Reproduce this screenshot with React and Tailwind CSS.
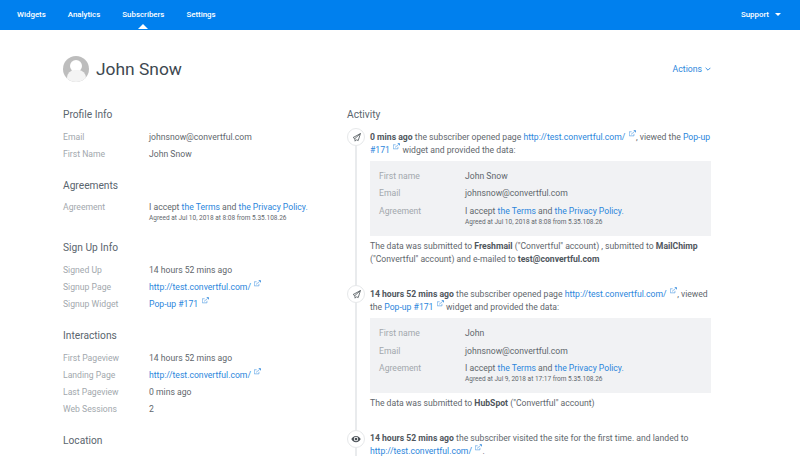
import React from "react";

function ExtIcon() {
    return (
        <svg viewBox="0 0 12 12" className="inline-block relative top-[-3px] w-[7px] h-[7px] ml-[3.5px] align-baseline text-[#2b86dc]" fill="none" stroke="currentColor">
            <path d="M8.5 6.5v3.500h-8v-7h4" strokeWidth="0.9" />
            <path d="M3.500 7.500L9 3" strokeWidth="0.9" />
            <path d="M7.500 0.300h4.200v4.200z" fill="currentColor" stroke="none" />
        </svg>
    );
}

function A({children}) {
    return <a className="text-[#2b86dc]">{children}</a>;
}

function Row({label, children}) {
    return (
        <div className="flex mb-[4.3px]">
            <div className="w-[86px] shrink-0 text-[#a2a8ad]">{label}</div>
            <div className="text-[#5f676d]">{children}</div>
        </div>
    );
}

function Section({title, children}) {
    return (
        <div className="mb-[17.9px]">
            <h3 className="text-[10.2px] leading-[14px] text-[#5a656e] mb-[8.5px]">{title}</h3>
            {children}
        </div>
    );
}

function Agreement({date}) {
    return (
        <div>
            I accept <A>the Terms</A> and <A>the Privacy Policy</A><span className="text-[#2b86dc]">.</span>
            <div className="text-[6.5px] leading-[9px]">{date}</div>
        </div>
    );
}

function Rocket() {
    return (
        <svg viewBox="0 0 16 16" className="w-[9px] h-[9px]" fill="none" stroke="#4a5157" strokeWidth="1.4" strokeLinejoin="round">
            <path d="M15 1L2 8l3 2 .5 4.500L8 12l3 1.500z" />
            <path d="M15 1L5 10" />
        </svg>
    );
}

function Eye() {
    return (
        <svg viewBox="0 0 16 12" className="w-[10px] h-[8px]" fill="#4a5157">
            <path fillRule="evenodd" d="M8 1C4.500 1 1.800 3.200 0.500 6 1.800 8.800 4.500 11 8 11s6.200-2.200 7.500-5C14.200 3.200 11.500 1 8 1zm0 8.500A3.500 3.500 0 1 1 8 2.500a3.500 3.500 0 0 1 0 7z" />
            <circle cx="8" cy="6" r="2.200" />
        </svg>
    );
}

function Item({icon, children, mb}) {
    return (
        <div className={"relative pl-[23px] " + mb}>
            <div className="absolute left-0 top-[-2.5px] w-[18px] h-[18px] rounded-full bg-white border border-[#e6e8ea] flex items-center justify-center">
                {icon}
            </div>
            {children}
        </div>
    );
}

function DataBox({children}) {
    return <div className="bg-[#f1f2f4] mt-[4.5px] mb-[4px] pt-[9px] pb-[5px] px-[9px]">{children}</div>;
}

function B({children}) {
    return <b className="font-bold text-[#4f565c]">{children}</b>;
}

export default function App() {
    return (
        <div className="h-screen overflow-hidden bg-white font-['Roboto',sans-serif] text-[8.65px] leading-[13px] text-[#5f676d]">
            <nav className="h-[30px] bg-[#0080ee] flex items-center justify-between pl-[17px] pr-[19px] pb-[2px] text-[7.9px] font-medium text-white">
                <div className="flex gap-[22px]">
                    <a>Widgets</a>
                    <a>Analytics</a>
                    <a className="relative">
                        Subscribers
                        <span className="absolute left-1/2 -translate-x-1/2 top-[16px] w-0 h-0 border-x-[5px] border-x-transparent border-b-[5px] border-b-white"></span>
                    </a>
                    <a>Settings</a>
                </div>
                <div className="flex items-center gap-[6px]">
                    <a>Support</a>
                    <span className="w-0 h-0 border-x-[3px] border-x-transparent border-t-[3px] border-t-white"></span>
                </div>
            </nav>

            <div className="pl-[63px] pr-[89px]">
                <div className="flex items-center justify-between h-[78px]">
                    <div className="flex items-center gap-[7px]">
                        <div className="w-[26px] h-[26px] rounded-full bg-[#bdbdbd] overflow-hidden flex flex-col items-center">
                            <div className="w-[12px] h-[13px] rounded-full bg-white mt-[4px]"></div>
                            <div className="w-[19px] h-[12px] rounded-t-[8px] bg-[#f4f4f4] -mt-[2px]"></div>
                        </div>
                        <h1 className="text-[17.4px] leading-[26px] text-[#3d4850]">John Snow</h1>
                    </div>
                    <a className="flex items-center gap-[3px] text-[8.7px] text-[#2b86dc]">
                        Actions
                        <svg viewBox="0 0 10 10" className="w-[6px] h-[6px]" fill="none" stroke="#2b86dc" strokeWidth="1.5"><path d="M1 3l4 4 4-4" /></svg>
                    </a>
                </div>

                <div className="flex">
                    <div className="w-[284px] shrink-0">
                        <Section title="Profile Info">
                            <Row label="Email">johnsnow@convertful.com</Row>
                            <Row label="First Name">John Snow</Row>
                        </Section>
                        <Section title="Agreements">
                            <Row label="Agreement"><Agreement date="Agreed at Jul 10, 2018 at 8:08 from 5.35.108.26" /></Row>
                        </Section>
                        <Section title="Sign Up Info">
                            <Row label="Signed Up">14 hours 52 mins ago</Row>
                            <Row label="Signup Page"><A>http://test.convertful.com/</A><ExtIcon /></Row>
                            <Row label="Signup Widget"><A>Pop-up #171</A><ExtIcon /></Row>
                        </Section>
                        <Section title="Interactions">
                            <Row label="First Pageview">14 hours 52 mins ago</Row>
                            <Row label="Landing Page"><A>http://test.convertful.com/</A><ExtIcon /></Row>
                            <Row label="Last Pageview">0 mins ago</Row>
                            <Row label="Web Sessions">2</Row>
                        </Section>
                        <Section title="Location"></Section>
                    </div>

                    <div className="flex-1 min-w-0">
                        <h3 className="text-[10.2px] leading-[14px] text-[#5a656e] mb-[8.5px]">Activity</h3>
                        <div className="relative">
                            <div className="absolute left-[8px] top-0 bottom-[-50px] w-[2px] bg-[#e9ebed]"></div>
                            <Item icon={<Rocket />} mb="mb-[22px]">
                                <B>0 mins ago</B> the subscriber opened page <A>http://test.convertful.com/</A><ExtIcon />, viewed the <A>Pop-up #171</A><ExtIcon /> widget and provided the data:
                                <DataBox>
                                    <Row label="First name">John Snow</Row>
                                    <Row label="Email">johnsnow@convertful.com</Row>
                                    <Row label="Agreement"><Agreement date="Agreed at Jul 10, 2018 at 8:08 from 5.35.108.26" /></Row>
                                </DataBox>
                                The data was submitted to <B>Freshmail</B> ("Convertful" account) , submitted to <B>MailChimp</B> ("Convertful" account) and e-mailed to <B>test@convertful.com</B>
                            </Item>
                            <Item icon={<Rocket />} mb="mb-[22px]">
                                <B>14 hours 52 mins ago</B> the subscriber opened page <A>http://test.convertful.com/</A><ExtIcon />, viewed the <A>Pop-up #171</A><ExtIcon /> widget and provided the data:
                                <DataBox>
                                    <Row label="First name">John</Row>
                                    <Row label="Email">johnsnow@convertful.com</Row>
                                    <Row label="Agreement"><Agreement date="Agreed at Jul 9, 2018 at 17:17 from 5.35.108.26" /></Row>
                                </DataBox>
                                The data was submitted to <B>HubSpot</B> ("Convertful" account)
                            </Item>
                            <Item icon={<Eye />} mb="mb-0">
                                <B>14 hours 52 mins ago</B> the subscriber visited the site for the first time. and landed to <A>http://test.convertful.com/</A><ExtIcon />.
                            </Item>
                        </div>
                    </div>
                </div>
            </div>
        </div>
    );
}
